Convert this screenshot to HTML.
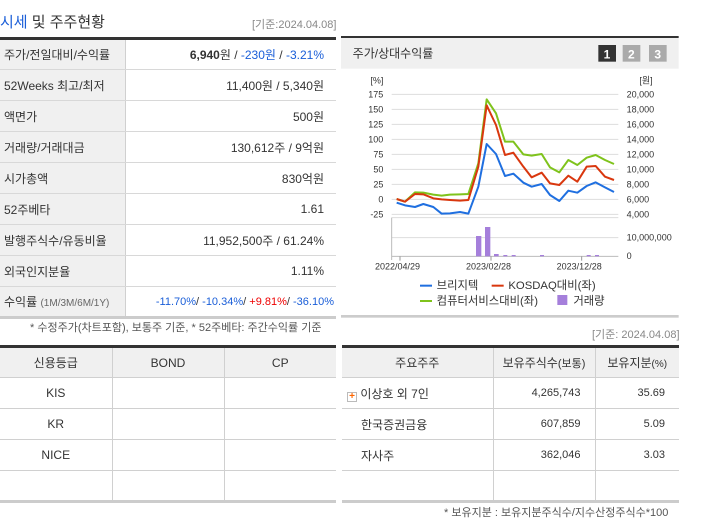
<!DOCTYPE html>
<html><head><meta charset="utf-8"><style>
*{margin:0;padding:0;box-sizing:border-box}
body{width:702px;height:525px;background:#fff;font-family:"Liberation Sans","Noto Sans CJK KR",sans-serif;color:#333;position:relative;overflow:hidden;font-size:12px}
.abs{position:absolute;white-space:nowrap}
table{border-collapse:collapse;position:absolute}
td,th{font-weight:normal;white-space:nowrap}
#t1{left:0;top:37px;width:336px;border-top:3px solid #333;table-layout:fixed}
#t1 td{height:31px;border-bottom:1px solid #d8d8d8;font-size:12px;padding:0 12px 0 4px;overflow:hidden}
#t1 td.l{width:125px;background:#f0f0f0;border-right:1px solid #d0d0d0;text-align:left;color:#333}
#t1 td.r{text-align:right;color:#333}
#t1 tr:last-child td{border-bottom:3px solid #ccc}
.b{color:#1a5ed8}.rd{color:#e00}
#t2{left:0;top:345px;width:336px;border-top:3px solid #333;table-layout:fixed}
#t3{left:342px;top:345px;width:337px;border-top:3px solid #333;table-layout:fixed}
#t2 td,#t2 th,#t3 td,#t3 th{height:31px;border-bottom:1px solid #d0d0d0;border-right:1px solid #d0d0d0;text-align:center;font-size:12px}
#t2 th,#t3 th{background:#f0f0f0}
#t2 td:last-child,#t2 th:last-child,#t3 td:last-child,#t3 th:last-child{border-right:none}
#t2 tr:last-child td,#t3 tr:last-child td{border-bottom:3px solid #ccc}
#t3 td.n{text-align:right;padding-right:14px;font-size:11px}
#t3 td.nm{text-align:left;padding-left:19px}
</style></head><body>
<div class="abs" style="left:0;top:11px;font-size:15px;color:#333"><span style="color:#1a5ed8">시세</span> 및 주주현황</div>
<div class="abs" style="left:252px;top:16px;font-size:11px;color:#888">[기준:2024.04.08]</div>
<table id="t1">
<tr><td class="l">주가/전일대비/수익률</td><td class="r"><b>6,940</b>원 / <span class="b">-230원</span> / <span class="b">-3.21%</span></td></tr>
<tr><td class="l">52Weeks 최고/최저</td><td class="r">11,400원 / 5,340원</td></tr>
<tr><td class="l">액면가</td><td class="r">500원</td></tr>
<tr><td class="l">거래량/거래대금</td><td class="r">130,612주 / 9억원</td></tr>
<tr><td class="l">시가총액</td><td class="r">830억원</td></tr>
<tr><td class="l">52주베타</td><td class="r">1.61</td></tr>
<tr><td class="l">발행주식수/유동비율</td><td class="r">11,952,500주 / 61.24%</td></tr>
<tr><td class="l">외국인지분율</td><td class="r">1.11%</td></tr>
<tr><td class="l">수익률 <span style="font-size:10px;color:#666">(1M/3M/6M/1Y)</span></td><td class="r" style="font-size:11px;padding:0 2px 0 0"><span class="b">-11.70%</span>/ <span class="b">-10.34%</span>/ <span class="rd">+9.81%</span>/ <span class="b">-36.10%</span></td></tr>
</table>
<svg class="abs" style="left:340px;top:30px" width="362" height="290" viewBox="0 0 1086 870" font-family="Liberation Sans, Noto Sans CJK KR, sans-serif">
<rect x="3" y="20" width="1013" height="96" fill="#f0f0f0"/>
<rect x="3" y="18" width="1013" height="6" fill="#333"/>
<text x="38" y="82" font-size="36" fill="#333">주가/상대수익률</text>
<rect x="775" y="45" width="53" height="50" fill="#333"/><text x="801" y="86" font-size="36" font-weight="bold" fill="#fff" text-anchor="middle">1</text>
<rect x="848" y="45" width="53" height="50" fill="#aaa"/><text x="874" y="86" font-size="36" font-weight="bold" fill="#fff" text-anchor="middle">2</text>
<rect x="927" y="45" width="53" height="50" fill="#aaa"/><text x="953" y="86" font-size="36" font-weight="bold" fill="#fff" text-anchor="middle">3</text>
<rect x="3" y="855" width="1013" height="8" fill="#ccc"/>
<g stroke="#ddd" stroke-width="3">
<line x1="155" x2="835" y1="193" y2="193"/><line x1="155" x2="835" y1="238" y2="238"/><line x1="155" x2="835" y1="283" y2="283"/><line x1="155" x2="835" y1="328" y2="328"/><line x1="155" x2="835" y1="373" y2="373"/><line x1="155" x2="835" y1="418" y2="418"/><line x1="155" x2="835" y1="463" y2="463"/><line x1="155" x2="835" y1="508" y2="508"/><line x1="155" x2="835" y1="553" y2="553"/><line x1="155" x2="835" y1="563" y2="563"/><line x1="155" x2="835" y1="623" y2="623"/><line x1="155" x2="835" y1="679" y2="679" stroke="#bbb"/>
<line x1="155" x2="155" y1="563" y2="690" stroke="#bbb"/><line x1="180" x2="180" y1="679" y2="692" stroke="#999"/><line x1="453" x2="453" y1="679" y2="692" stroke="#999"/><line x1="725" x2="725" y1="679" y2="692" stroke="#999"/>
</g>
<g font-size="27" fill="#333" text-anchor="end">
<text x="130" y="160">[%]</text><text x="130" y="202">175</text><text x="130" y="247">150</text><text x="130" y="292">125</text><text x="130" y="337">100</text><text x="130" y="382">75</text><text x="130" y="427">50</text><text x="130" y="472">25</text><text x="130" y="517">0</text><text x="130" y="562">-25</text>
</g>
<g font-size="27" fill="#333">
<text x="898" y="160">[원]</text><text x="860" y="202">20,000</text><text x="860" y="247">18,000</text><text x="860" y="292">16,000</text><text x="860" y="337">14,000</text><text x="860" y="382">12,000</text><text x="860" y="427">10,000</text><text x="860" y="472">8,000</text><text x="860" y="517">6,000</text><text x="860" y="562">4,000</text><text x="860" y="632">10,000,000</text><text x="860" y="687">0</text>
<text x="105" y="718">2022/04/29</text><text x="378" y="718">2023/02/28</text><text x="650" y="718">2023/12/28</text>
</g>
<g fill="#a57fdb"><rect x="408" y="618" width="16" height="61"/><rect x="435" y="591" width="16" height="88"/><rect x="462" y="672" width="14" height="7"/><rect x="490" y="675" width="12" height="4"/><rect x="515" y="675" width="12" height="4"/><rect x="600" y="675" width="12" height="4"/><rect x="740" y="675" width="12" height="4"/><rect x="765" y="675" width="12" height="4"/></g>
<g fill="none" stroke-width="6" stroke-linejoin="round">
<polyline stroke="#7fc31c" points="170,507 195,515 225,487 250,488 280,494 305,497 330,494 360,493 385,492 415,400 440,208 468,250 495,335 520,335 550,373 575,377 605,372 630,412 658,427 685,390 712,405 740,383 767,375 795,390 822,402"/>
<polyline stroke="#d9370e" points="170,507 195,515 225,492 250,493 280,505 305,508 330,510 360,512 385,510 415,410 440,226 468,285 495,375 520,368 550,410 575,442 605,428 630,460 658,465 685,437 712,455 740,410 767,408 795,440 822,450"/>
<polyline stroke="#1f6fe0" points="170,518 195,526 225,531 250,522 280,531 305,551 330,550 360,546 385,551 415,470 440,342 468,372 495,438 520,431 550,458 575,470 605,462 630,495 658,513 685,482 712,488 740,468 767,457 795,472 822,486"/>
</g>
<g font-size="34" fill="#333">
<rect x="240" y="764" width="36" height="6" fill="#1f6fe0"/><text x="290" y="777">브리지텍</text>
<rect x="455" y="764" width="36" height="6" fill="#d9370e"/><text x="505" y="777">KOSDAQ대비(좌)</text>
<rect x="240" y="810" width="36" height="6" fill="#7fc31c"/><text x="290" y="823">컴퓨터서비스대비(좌)</text>
<rect x="652" y="795" width="30" height="30" fill="#a57fdb"/><text x="700" y="823">거래량</text>
</g>
</svg>
<div class="abs" style="left:30px;top:319px;font-size:11px;color:#555">* 수정주가(차트포함), 보통주 기준, * 52주베타: 주간수익률 기준</div>
<div class="abs" style="left:592px;top:326px;font-size:11px;color:#888">[기준: 2024.04.08]</div>
<table id="t2">
<tr><th>신용등급</th><th>BOND</th><th>CP</th></tr>
<tr><td>KIS</td><td></td><td></td></tr>
<tr><td>KR</td><td></td><td></td></tr>
<tr><td>NICE</td><td></td><td></td></tr>
<tr><td></td><td></td><td></td></tr>
</table>
<table id="t3">
<colgroup><col style="width:151px"><col style="width:102px"><col style="width:84px"></colgroup>
<tr><th>주요주주</th><th>보유주식수<span style="font-size:11px">(보통)</span></th><th>보유지분<span style="font-size:10px">(%)</span></th></tr>
<tr><td class="nm" style="padding-left:5px"><span style="display:inline-block;width:10px;height:10px;border:1px solid #bbb;background:#fff;color:#f60;font-size:10px;line-height:8px;text-align:center;vertical-align:-1px;font-weight:bold">+</span> 이상호 외 7인</td><td class="n">4,265,743</td><td class="n">35.69</td></tr>
<tr><td class="nm">한국증권금융</td><td class="n">607,859</td><td class="n">5.09</td></tr>
<tr><td class="nm">자사주</td><td class="n">362,046</td><td class="n">3.03</td></tr>
<tr><td></td><td></td><td></td></tr>
</table>
<div class="abs" style="left:444px;top:504px;font-size:11px;color:#555">* 보유지분 : 보유지분주식수/지수산정주식수*100</div>
</body></html>
